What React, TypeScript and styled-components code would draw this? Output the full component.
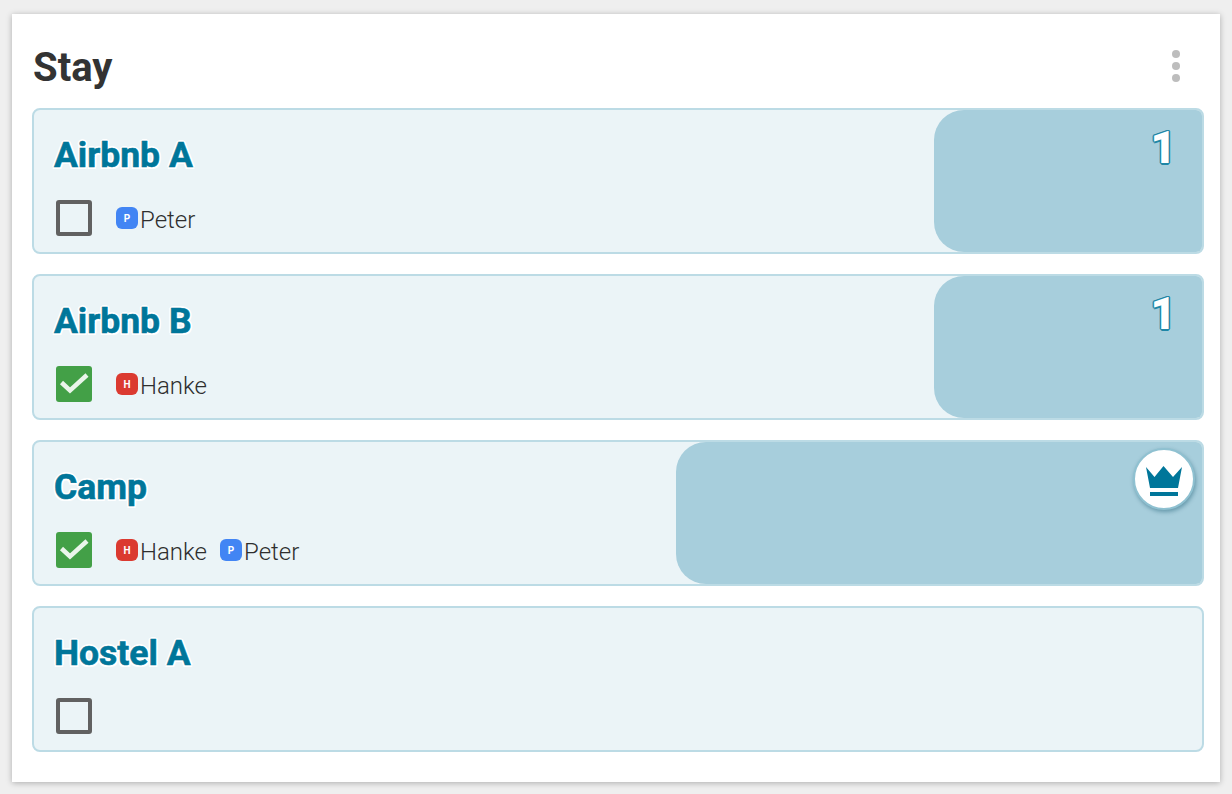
import React from 'react';
import styled, { createGlobalStyle } from 'styled-components';

const GlobalStyle = createGlobalStyle`
  html, body {
    margin: 0;
    padding: 0;
    background: #efefef;
  }
  body {
    font-family: Roboto, "Liberation Sans", sans-serif;
  }
`;

const Page = styled.div`
  width: 1232px;
  height: 794px;
  padding: 14px 12px 12px;
  box-sizing: border-box;
  overflow: hidden;
`;

const Card = styled.section`
  height: 768px;
  box-sizing: border-box;
  background: #fff;
  padding: 0 16px 0 20px;
  box-shadow: 0 1px 6px rgba(0, 0, 0, 0.28);
`;

const Header = styled.header`
  height: 94px;
  display: flex;
  align-items: center;
  justify-content: space-between;
  padding: 14px 24px 0 1px;
  box-sizing: border-box;
`;

const Heading = styled.h2`
  margin: 0;
  font-size: 40px;
  line-height: 42px;
  font-weight: 700;
  color: #333;
`;

const MoreButton = styled.div`
  display: flex;
  flex-direction: column;
  gap: 4px;
  margin-top: -4px;
`;

const Dot = styled.span`
  width: 8px;
  height: 8px;
  border-radius: 50%;
  background: #bdbdbd;
`;

const List = styled.div`
  display: flex;
  flex-direction: column;
  gap: 20px;
`;

const Row = styled.article`
  position: relative;
  height: 146px;
  box-sizing: border-box;
  background: #ebf4f7;
  border: 2px solid #bcdbe5;
  border-radius: 8px;
  padding: 22px 20px 0;
`;

const VoteFill = styled.div`
  position: absolute;
  top: 0;
  right: 0;
  bottom: 0;
  background: #a7cedc;
  border-radius: 30px 6px 6px 30px;
`;

const Title = styled.h3`
  position: relative;
  margin: 0;
  font-size: 35.5px;
  line-height: 47px;
  font-weight: 700;
  color: #00769a;
  -webkit-text-stroke: 0.6px #00769a;
  text-shadow:
    -2px 0 0 #fff, 2px 0 0 #fff, 0 -2px 0 #fff, 0 2px 0 #fff,
    -1.5px -1.5px 0 #fff, 1.5px -1.5px 0 #fff, -1.5px 1.5px 0 #fff, 1.5px 1.5px 0 #fff;
`;

const Meta = styled.div`
  position: relative;
  display: flex;
  align-items: center;
  margin-top: 21px;
  padding-left: 2px;
  height: 36px;
`;

const CheckBox = styled.span<{ $checked: boolean }>`
  width: 36px;
  height: 36px;
  box-sizing: border-box;
  border-radius: 3px;
  border: ${(p) => (p.$checked ? 'none' : '4px solid #616161')};
  background: ${(p) => (p.$checked ? '#43a047' : 'transparent')};
  margin-right: 24px;
  display: flex;
  align-items: center;
  justify-content: center;
`;

const Voter = styled.span`
  display: flex;
  align-items: center;
  margin-right: 13px;
  font-size: 24px;
  font-weight: 300;
  color: #2e2e2e;
`;

const VoterName = styled.span`
  margin-top: 4px;
`;

const Avatar = styled.span<{ $color: string }>`
  width: 22px;
  height: 22px;
  border-radius: 6px;
  margin-right: 2px;
  background: ${(p) => p.$color};
  color: #fff;
  font-size: 10px;
  font-weight: 700;
  display: flex;
  align-items: center;
  justify-content: center;
`;

const Rank = styled.span`
  position: absolute;
  top: 13px;
  right: 26px;
  font-size: 44px;
  line-height: 50px;
  font-weight: 900;
  color: #fff;
  text-shadow:
    -1.5px 0 0 #1f86a6, 1.5px 0 0 #1f86a6, 0 -1.5px 0 #1f86a6, 0 1.5px 0 #1f86a6,
    -1px -1px 0 #1f86a6, 1px -1px 0 #1f86a6, -1px 1px 0 #1f86a6, 1px 1px 0 #1f86a6;
`;

const Badge = styled.span`
  position: absolute;
  top: 6px;
  right: 7px;
  width: 62px;
  height: 62px;
  box-sizing: border-box;
  border-radius: 50%;
  padding-top: 3px;
  background: #fff;
  border: 2px solid #8fc1d1;
  box-shadow: 1px 2px 4px rgba(0, 70, 95, 0.4);
  display: flex;
  align-items: center;
  justify-content: center;
`;

const CheckIcon = () => (
  <svg width="36" height="36" viewBox="0 0 36 36">
    <path d="M5.5 16.5 L14 24.5 L31 9" fill="none" stroke="#eaf5ea" strokeWidth="4.5" />
  </svg>
);

const CrownIcon = () => (
  <svg width="36" height="30" viewBox="0 0 36 30">
    <path d="M0 1 L8.5 11 L17.5 0 L27 11 L36 1 L32 22 H4 Z" fill="#00769a" />
    <rect x="4" y="26" width="28" height="4" fill="#00769a" />
  </svg>
);

interface Person {
  name: string;
  letter: string;
  color: string;
}

interface Stay {
  title: string;
  checked: boolean;
  voters: Person[];
  fill?: number;
  rank?: number;
  winner?: boolean;
}

const peter: Person = { name: 'Peter', letter: 'P', color: '#4285f4' };
const hanke: Person = { name: 'Hanke', letter: 'H', color: '#db3a30' };

const stays: Stay[] = [
  { title: 'Airbnb A', checked: false, voters: [peter], fill: 268, rank: 1 },
  { title: 'Airbnb B', checked: true, voters: [hanke], fill: 268, rank: 1 },
  { title: 'Camp', checked: true, voters: [hanke, peter], fill: 526, winner: true },
  { title: 'Hostel A', checked: false, voters: [] },
];

const App: React.FC = () => {
  return (
    <Page>
      <GlobalStyle />
      <Card>
        <Header>
          <Heading>Stay</Heading>
          <MoreButton>
            <Dot />
            <Dot />
            <Dot />
          </MoreButton>
        </Header>
        <List>
          {stays.map((stay) => (
            <Row key={stay.title}>
              {stay.fill ? <VoteFill style={{ width: stay.fill }} /> : null}
              <Title>{stay.title}</Title>
              <Meta>
                <CheckBox $checked={stay.checked}>{stay.checked && <CheckIcon />}</CheckBox>
                {stay.voters.map((voter) => (
                  <Voter key={voter.name}>
                    <Avatar $color={voter.color}>{voter.letter}</Avatar>
                    <VoterName>{voter.name}</VoterName>
                  </Voter>
                ))}
              </Meta>
              {stay.rank ? <Rank>{stay.rank}</Rank> : null}
              {stay.winner ? (
                <Badge>
                  <CrownIcon />
                </Badge>
              ) : null}
            </Row>
          ))}
        </List>
      </Card>
    </Page>
  );
};

export default App;
